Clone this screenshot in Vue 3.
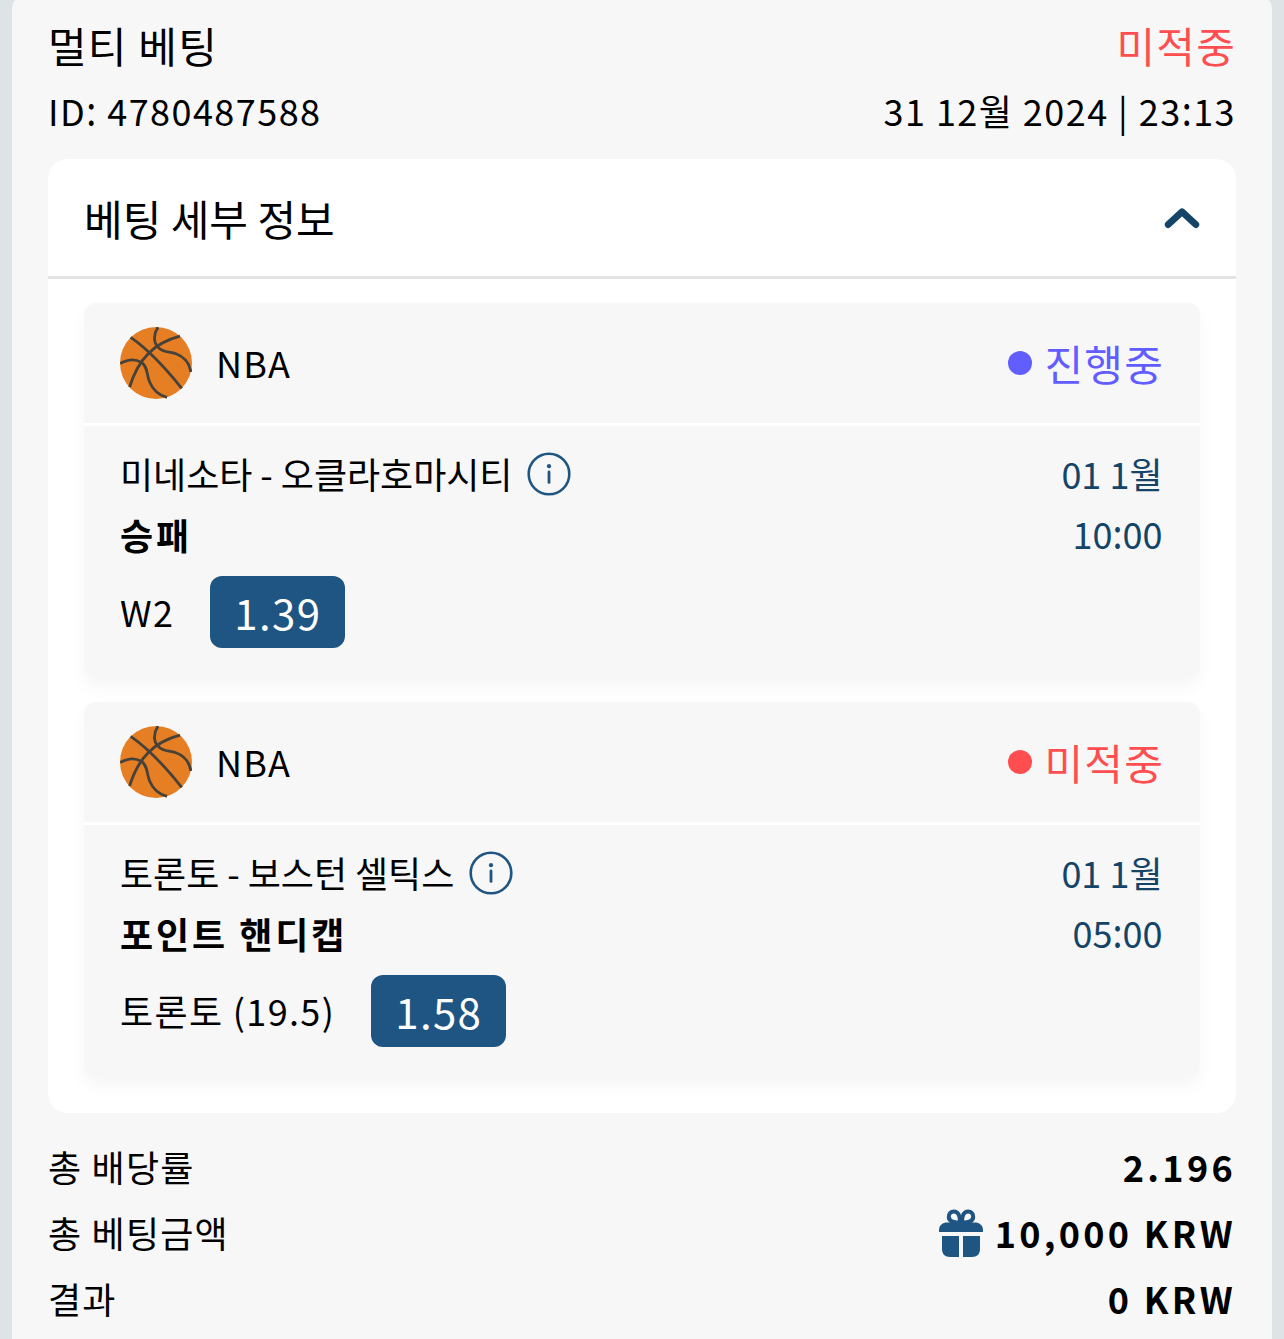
<script setup>
const bets = [
  {
    league: 'NBA',
    status: '진행중',
    tone: 'live',
    match: '미네소타 - 오클라호마시티',
    date: '01 1월',
    time: ['10', '00'],
    market: '승패',
    pick: 'W2',
    odds: '1.39'
  },
  {
    league: 'NBA',
    status: '미적중',
    tone: 'lost',
    match: '토론토 - 보스턴 셀틱스',
    date: '01 1월',
    time: ['05', '00'],
    market: '포인트 핸디캡',
    pick: '토론토 (19.5)',
    odds: '1.58'
  }
]

const totals = [
  { label: '총 배당률', value: '2.196' },
  { label: '총 베팅금액', value: '10,000 KRW', gift: true },
  { label: '결과', value: '0 KRW' }
]
</script>

<template>
  <main class="page">
    <section class="slip">
      <header class="head">
        <div class="row title">
          <span>멀티 베팅</span>
          <span class="lost">미적중</span>
        </div>
        <div class="row meta">
          <span>ID<span class="colon">:</span> 4780487588</span>
          <span>31 12월 2024 | 23<span class="colon">:</span>13</span>
        </div>
      </header>

      <div class="details">
        <div class="row details-head">
          <span>베팅 세부 정보</span>
          <svg class="chevron" viewBox="0 0 36 24" fill="none">
            <path d="M4.2 18.6 18 5.8 31.8 18.6" stroke="#154469" stroke-width="6.8" stroke-linecap="round" stroke-linejoin="round" />
          </svg>
        </div>

        <div class="list">
          <article v-for="bet in bets" :key="bet.match" class="bet">
            <div class="row bet-head">
              <div class="league">
                <svg class="ball" viewBox="0 0 72 72" fill="none">
                  <circle cx="36" cy="36" r="36" fill="#e67e24" />
                  <g stroke="#46423a" stroke-width="2.8">
                    <path d="M10.7 10.3C29 23 44 39 61.7 61.3" />
                    <path d="M60 9.2C34 16 18 32 9.6 60.2" />
                    <path d="M38 .2C33.4 7 33 15.5 38.6 20.8C44 26 49 24.3 56 26.8C64 29.8 69.4 36 71 45" />
                    <path d="M.2 36.6C7 32.6 15 31.8 21.2 35.2C28 40 26.4 47 29.6 55C32.8 62.6 38 68 47 70.4" />
                  </g>
                </svg>
                <span class="name">{{ bet.league }}</span>
              </div>
              <div class="status" :class="bet.tone">
                <i class="dot"></i>
                <span class="name">{{ bet.status }}</span>
              </div>
            </div>
            <div class="bet-body">
              <div class="row line">
                <div class="match">
                  <span class="name">{{ bet.match }}</span>
                  <svg class="info" viewBox="0 0 44 44" fill="none">
                    <circle cx="22" cy="22" r="20.3" stroke="#1f5582" stroke-width="2.6" />
                    <circle cx="22" cy="14.2" r="2.1" fill="#1f5582" />
                    <path d="M22 20V30.4" stroke="#1f5582" stroke-width="2.8" stroke-linecap="round" />
                  </svg>
                </div>
                <span class="when">{{ bet.date }}</span>
              </div>
              <div class="row line">
                <span class="market">{{ bet.market }}</span>
                <span class="when">{{ bet.time[0] }}<span class="colon">:</span>{{ bet.time[1] }}</span>
              </div>
              <div class="pick">
                <span class="name">{{ bet.pick }}</span>
                <b class="odds">{{ bet.odds }}</b>
              </div>
            </div>
          </article>
        </div>
      </div>

      <footer class="totals">
        <div v-for="t in totals" :key="t.label" class="row total">
          <span class="name">{{ t.label }}</span>
          <span class="value">
            <svg v-if="t.gift" class="gift" viewBox="0 0 44 48">
              <g fill="#1f5582">
                <path d="M0 23V21C0 16 4 13.4 8 13.4H36C40 13.4 44 16 44 21V23Z" />
                <path d="M3 27H20V48H11C6 48 3 45 3 40Z" />
                <path d="M24 27H41V40C41 45 38 48 33 48H24Z" />
              </g>
              <g fill="none" stroke="#1f5582" stroke-width="4">
                <path d="M20.8 13.2C21.4 6.5 18.8 2.4 15 2.4C11.6 2.4 9.6 5 9.8 8C10 12 14 14 20.8 13.2Z" />
                <path d="M23.2 13.2C22.6 6.5 25.2 2.4 29 2.4C32.4 2.4 34.4 5 34.2 8C34 12 30 14 23.2 13.2Z" />
              </g>
            </svg>
            <span class="name">{{ t.value }}</span>
          </span>
        </div>
      </footer>
    </section>
  </main>
</template>

<style>
body {
  margin: 0;
  background: #dee3e6;
}
</style>

<style scoped>
.page {
  box-sizing: border-box;
  height: 1339px;
  padding: 0 12px;
  overflow: hidden;
  background: #dee3e6;
  color: #000;
  font-family: "Noto Sans CJK KR", "Noto Sans", sans-serif;
  font-size: 36px;
  white-space: nowrap;
}
.slip {
  box-sizing: border-box;
  height: 1339px;
  padding: 11px 36px 0;
  border-radius: 4px 4px 0 0 / 10px 10px 0 0;
  background: #f7f7f7;
}
.row {
  display: flex;
  align-items: center;
  justify-content: space-between;
}
.name {
  padding-bottom: 2px;
}
.colon {
  display: inline-block;
  line-height: 1;
  transform: translateY(-3px) scaleY(1.12);
}
.title {
  height: 66px;
  font-size: 42px;
  letter-spacing: 1.2px;
}
.meta {
  height: 66px;
  letter-spacing: 1.45px;
}
.lost {
  color: #ff4e50;
}
.live {
  color: #625dff;
}
.details {
  margin-top: 16px;
  border-radius: 20px;
  background: #fff;
}
.details-head {
  height: 117px;
  padding: 0 36px;
  border-bottom: 3px solid #e1e3e5;
  font-size: 42px;
}
.chevron {
  width: 36px;
  height: 24px;
}
.list {
  display: flex;
  flex-direction: column;
  gap: 24px;
  padding: 24px 36px 36px;
}
.bet {
  height: 375px;
  border-radius: 12px;
  background: #f7f7f7;
  box-shadow: 0 9px 18px rgba(0, 0, 0, 0.04);
}
.bet-head {
  height: 120px;
  padding: 0 36px;
  border-bottom: 3px solid #fff;
}
.league {
  display: flex;
  align-items: center;
  gap: 24px;
  letter-spacing: 1.2px;
}
.ball {
  width: 72px;
  height: 72px;
}
.status {
  display: flex;
  align-items: center;
  gap: 12px;
  font-size: 42px;
  letter-spacing: 1.2px;
}
.dot {
  width: 24px;
  height: 24px;
  border-radius: 50%;
  background: currentColor;
}
.bet-body {
  padding: 18px 36px 0;
}
.line {
  height: 60px;
}
.match {
  display: flex;
  align-items: center;
  gap: 15px;
  letter-spacing: -0.04px;
}
.info {
  width: 44px;
  height: 44px;
}
.when {
  padding: 0 1.5px 2px 0;
  color: #154469;
}
.market {
  padding-bottom: 1px;
  font-weight: 700;
  letter-spacing: 2.9px;
}
.pick {
  display: flex;
  align-items: center;
  gap: 36px;
  height: 72px;
  margin-top: 12px;
  letter-spacing: 1.35px;
}
.odds {
  box-sizing: border-box;
  width: 135px;
  height: 72px;
  padding-left: 24px;
  border-radius: 12px;
  background: #1f5582;
  color: #fff;
  font-size: 42px;
  font-weight: 400;
  line-height: 72px;
}
.totals {
  padding-top: 21px;
}
.total {
  height: 66px;
  letter-spacing: 1.2px;
}
.value {
  display: flex;
  align-items: center;
  gap: 12px;
  font-weight: 700;
  letter-spacing: 3.3px;
}
.gift {
  width: 44px;
  height: 48px;
}
</style>
